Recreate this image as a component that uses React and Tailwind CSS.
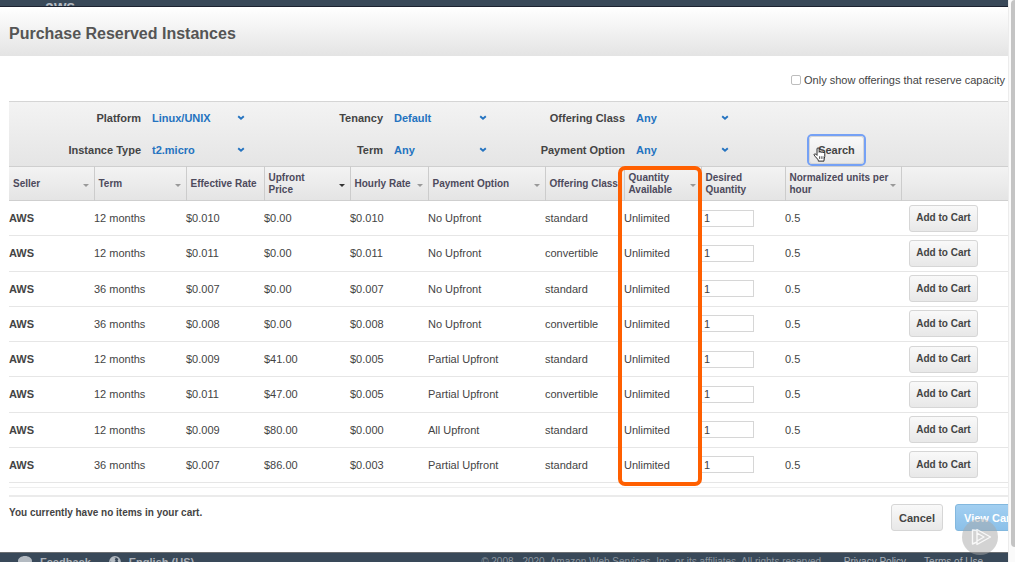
import { useState } from "react";

const filters = [
  { id: "platform", label: "Platform", options: ["Linux/UNIX", "Windows"] },
  { id: "tenancy", label: "Tenancy", options: ["Default", "Dedicated"] },
  { id: "offering-class", label: "Offering Class", options: ["Any", "standard", "convertible"] },
  { id: "instance-type", label: "Instance Type", options: ["t2.micro", "t2.small"] },
  { id: "term", label: "Term", options: ["Any", "12 months", "36 months"] },
  { id: "payment-option", label: "Payment Option", options: ["Any", "No Upfront", "Partial Upfront", "All Upfront"] },
];

const columns = [
  { label: "Seller", width: "w-[85px]", sort: "idle" },
  { label: "Term", width: "w-[92px]", sort: "idle" },
  { label: "Effective Rate", width: "w-[78px]" },
  { label: "Upfront\nPrice", width: "w-[86px]", sort: "active" },
  { label: "Hourly Rate", width: "w-[78px]", sort: "idle" },
  { label: "Payment Option", width: "w-[117px]", sort: "idle" },
  { label: "Offering Class", width: "w-[79px]" },
  { label: "Quantity\nAvailable", width: "w-[77px]", sort: "idle" },
  { label: "Desired\nQuantity", width: "w-[84px]" },
  { label: "Normalized units per\nhour", width: "w-[116px]", sort: "idle" },
];

const offerings = [
  ["12 months", "$0.010", "$0.00", "$0.010", "No Upfront", "standard"],
  ["12 months", "$0.011", "$0.00", "$0.011", "No Upfront", "convertible"],
  ["36 months", "$0.007", "$0.00", "$0.007", "No Upfront", "standard"],
  ["36 months", "$0.008", "$0.00", "$0.008", "No Upfront", "convertible"],
  ["12 months", "$0.009", "$41.00", "$0.005", "Partial Upfront", "standard"],
  ["12 months", "$0.011", "$47.00", "$0.005", "Partial Upfront", "convertible"],
  ["12 months", "$0.009", "$80.00", "$0.000", "All Upfront", "standard"],
  ["36 months", "$0.007", "$86.00", "$0.003", "Partial Upfront", "standard"],
];

const greyButton =
  "rounded-[3px] border border-[#d6d6d6] bg-linear-to-b from-[#f9f9f9] to-[#e8e8e8] font-bold text-[#444444] whitespace-nowrap";

function Filter({ id, label, options }) {
  return (
    <div className="flex h-8 items-center">
      <label htmlFor={id} className="w-[132px] shrink-0 text-right">
        {label}
      </label>
      <div className="relative ml-[11px] w-[94px]">
        <select id={id} className="block w-full appearance-none bg-transparent font-bold text-[#2473c0] outline-none">
          {options.map((o) => (
            <option key={o}>{o}</option>
          ))}
        </select>
        <svg viewBox="0 0 8 6" className="pointer-events-none absolute top-[5px] right-[1px] h-[6px] w-2">
          <path d="M1.200 1.200 4 3.700 6.800 1.200" fill="none" stroke="#2473c0" strokeWidth="1.900" />
        </svg>
      </div>
    </div>
  );
}

function Pointer() {
  return (
    <svg viewBox="0 0 14 17" className="pointer-events-none absolute top-[11px] left-[4px] h-[15px] w-[13px]">
      <path
        d="M4.200 9.500V2.200a1.200 1.200 0 0 1 2.400 0V6a1.100 1.100 0 0 1 2.200.3 1.100 1.100 0 0 1 2.200.5 1 1 0 0 1 2 .6v3.200c0 1.500-.9 2.600-.9 4.400v1H5.600v-.9C5.200 13.500 2.600 11.700 1 9.200c-.6-1.200.9-2 1.800-1.100z"
        fill="#ffffff"
        stroke="#222222"
        strokeWidth="1.100"
        strokeLinejoin="round"
      />
      <path d="M7 10.500v3M9 10.500v3M11 10.500v3" stroke="#222222" strokeWidth="0.800" />
    </svg>
  );
}

export default function App() {
  const [quantities, setQuantities] = useState(offerings.map(() => "1"));

  return (
    <div className="flex h-screen overflow-hidden bg-white font-['Liberation_Sans',Arial,sans-serif] text-[11px] leading-3 text-[#444444]">
      <div className="relative flex min-w-0 flex-1 flex-col overflow-hidden">
        <div className="h-[7px] shrink-0 overflow-hidden border-b border-[#1c2230] bg-[#394959] pl-[45px]">
          <div className="pt-px text-base leading-3 font-bold text-[#b4bac1]">aws</div>
        </div>

        <header className="flex h-[49px] shrink-0 items-center bg-linear-to-b from-white to-[#e4e4e4] px-[9px] pt-1">
          <h1 className="text-base font-bold text-[#555555]">Purchase Reserved Instances</h1>
        </header>

        <main className="flex-1 pl-[9px]">
          <div className="flex h-[45px] items-center justify-end pt-[2px] pr-[3px]">
            <label className="flex items-center gap-[3px]">
              <input type="checkbox" className="size-[10px] appearance-none rounded-[2px] border border-[#bdbdbd] bg-white" />
              Only show offerings that reserve capacity
            </label>
          </div>

          <form
            onSubmit={(e) => e.preventDefault()}
            className="flex border-t border-[#d5d5d5] bg-linear-to-b from-[#f3f3f3] to-[#e5e5e5] text-[11px] leading-4 font-bold"
          >
            <div className="grid grid-cols-[242px_242px_242px]">
              {filters.map((f) => (
                <Filter key={f.id} {...f} />
              ))}
            </div>
            <div className="flex flex-1 items-end pb-[2px] pl-[74px]">
              <div className="relative">
                <button
                  type="submit"
                  className={`${greyButton} h-7 w-[55px] shadow-[0_0_0_2px_#75a1f5] outline-none`}
                >
                  Search
                </button>
                <Pointer />
              </div>
            </div>
          </form>

          <div className="relative">
            <table className="h-[317px] w-full table-fixed border-collapse text-left">
              <thead className="bg-linear-to-b from-[#f3f3f3] to-[#e4e4e4] text-[10px] text-[#4d4a5c]">
                <tr className="h-[34px] border-y border-[#cfcfcf]">
                  {columns.map((c, i) => (
                    <th key={c.label} scope="col" className={`${c.width} p-0 ${i ? "border-l border-[#cccccc]" : ""}`}>
                      <div className="relative pt-px pl-1">
                        <span className="block whitespace-pre">{c.label}</span>
                        {c.sort && (
                          <svg viewBox="0 0 6 3" className="absolute top-1/2 right-[5px] h-[3px] w-[6px]">
                            <path d="M0 0h6L3 3z" fill={c.sort === "active" ? "#333333" : "#999999"} />
                          </svg>
                        )}
                      </div>
                    </th>
                  ))}
                  <th className="border-l border-[#cccccc] p-0" aria-label="Actions" />
                </tr>
              </thead>
              <tbody>
                {offerings.map((row, i) => (
                  <tr key={i} className="border-b border-[#e6e6e6]">
                    <th scope="row" className="p-0 font-bold">AWS</th>
                    {row.map((cell, j) => (
                      <td key={j} className="p-0 whitespace-nowrap">{cell}</td>
                    ))}
                    <td className="p-0">Unlimited</td>
                    <td className="p-0">
                      <input
                        type="text"
                        aria-label="Desired quantity"
                        value={quantities[i]}
                        onChange={(e) => setQuantities(quantities.map((q, k) => (k === i ? e.target.value : q)))}
                        className="block h-[17px] w-[53px] border border-[#d6d6d6] bg-white px-[2px]"
                      />
                    </td>
                    <td className="p-0">0.5</td>
                    <td className="p-0 pl-2">
                      <button type="button" className={`${greyButton} block h-[27px] w-[69px] text-[10px]`}>
                        Add to Cart
                      </button>
                    </td>
                  </tr>
                ))}
              </tbody>
            </table>
            <div className="pointer-events-none absolute top-0 left-[609px] h-[320px] w-[84px] rounded-[7px] border-4 border-[#ff5f00]" />
          </div>

          <div className="mt-1 h-px bg-[#efefef]" />
          <div className="mt-[7px] h-[2px] bg-[#ebebeb]" />
          <div className="flex justify-between pt-[7px]">
            <p className="pt-[3px] text-[10px] font-bold">You currently have no items in your cart.</p>
            <div className="-mr-[15px] flex gap-3">
              <button type="button" className={`${greyButton} h-[27px] w-[52px]`}>
                Cancel
              </button>
              <button
                type="button"
                className="h-[27px] w-[68px] rounded-[3px] border border-[#83b8de] bg-linear-to-b from-[#a2cff1] to-[#8bc0e9] font-bold text-white"
              >
                View Cart
              </button>
            </div>
          </div>
        </main>

        <footer className="h-[10px] shrink-0 overflow-hidden border-t border-[#6c6f72] bg-[#394959]">
          <div className="flex items-center pt-[3px] pr-[25px] pl-[18px] whitespace-nowrap text-[#a9b0b8]">
            <svg viewBox="0 0 14 12" className="h-3 w-[14px] shrink-0">
              <path d="M7 0c3.900 0 7 2.200 7 5s-3.100 5-7 5l-4 2 .6-2.700C1.400 8.400 0 6.800 0 5c0-2.800 3.100-5 7-5z" fill="#b3bac1" />
            </svg>
            <a href="#feedback" className="ml-2 font-bold">Feedback</a>
            <svg viewBox="0 0 12 12" className="ml-[18px] size-3 shrink-0">
              <circle cx="6" cy="6" r="5.200" fill="none" stroke="#b3bac1" strokeWidth="1.400" />
              <path d="M1 5c.4-2 1.500-3.600 3.600-4l2 1-.8 1.700 1 1.200-2 1.500L3 6.300zM8 1.500l2.700 2.300.6 2.700-2-.4-.7-1.700.8-1.200z" fill="#b3bac1" />
            </svg>
            <a href="#language" className="ml-2 font-bold">English (US)</a>
            <span className="ml-auto text-[10px] text-[#8b959f]">
              © 2008 - 2020, Amazon Web Services, Inc. or its affiliates. All rights reserved.
            </span>
            <a href="#privacy" className="ml-[20px] text-[10px]">Privacy Policy</a>
            <a href="#terms" className="ml-[18px] text-[10px]">Terms of Use</a>
          </div>
        </footer>

        <svg viewBox="0 0 36 36" className="pointer-events-none absolute right-[10px] bottom-[7px] size-9">
          <circle cx="18" cy="18" r="18" fill="#a8a8a8" fillOpacity="0.500" />
          <path
            d="M15 11.500 10.500 11v14l4.500-2M15 10.500v15L28.500 18zM15 14v8l7-4z"
            fill="none"
            stroke="#ffffff"
            strokeWidth="1.400"
            strokeLinejoin="round"
            opacity="0.850"
          />
        </svg>
      </div>

      <div className="w-[7px] shrink-0 border-l border-[#ececec] bg-[#fafafa] pl-[2px]" aria-hidden="true">
        <div className="h-[547px] max-h-full rounded-l bg-[#c4c4c4]" />
      </div>
    </div>
  );
}
